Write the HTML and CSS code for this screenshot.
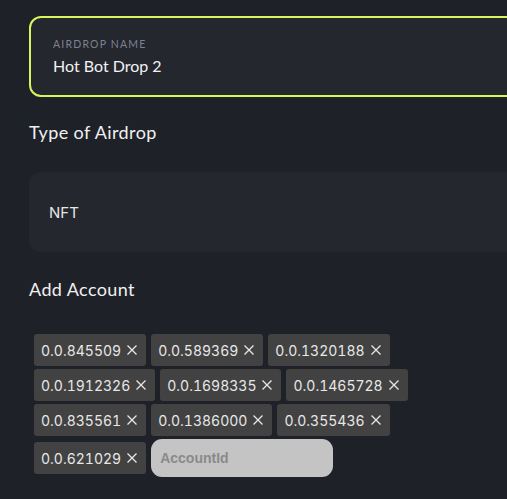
FILE: index.html
```html
<!DOCTYPE html>
<html lang="en">
<head>
  <meta charset="UTF-8" />
  <meta name="viewport" content="width=device-width, initial-scale=1.0" />
  <title>Create Airdrop</title>
  <link rel="stylesheet" href="styles.css">
</head>
<body>
  <div class="form">
    <label class="field field-active">
      <span class="field-label">AIRDROP NAME</span>
      <span class="field-value">Hot Bot Drop 2</span>
    </label>

    <h2 class="section-title">Type of Airdrop</h2>
    <div class="select">NFT</div>

    <h2 class="section-title">Add Account</h2>
    <div class="chips">
      <span class="chip">0.0.845509<svg class="chip-x" viewBox="0 0 10 10"><path d="M0.5 0.5L9.5 9.5M9.5 0.5L0.5 9.5"/></svg></span>
      <span class="chip">0.0.589369<svg class="chip-x" viewBox="0 0 10 10"><path d="M0.5 0.5L9.5 9.5M9.5 0.5L0.5 9.5"/></svg></span>
      <span class="chip">0.0.1320188<svg class="chip-x" viewBox="0 0 10 10"><path d="M0.5 0.5L9.5 9.5M9.5 0.5L0.5 9.5"/></svg></span>
      <span class="chip">0.0.1912326<svg class="chip-x" viewBox="0 0 10 10"><path d="M0.5 0.5L9.5 9.5M9.5 0.5L0.5 9.5"/></svg></span>
      <span class="chip">0.0.1698335<svg class="chip-x" viewBox="0 0 10 10"><path d="M0.5 0.5L9.5 9.5M9.5 0.5L0.5 9.5"/></svg></span>
      <span class="chip">0.0.1465728<svg class="chip-x" viewBox="0 0 10 10"><path d="M0.5 0.5L9.5 9.5M9.5 0.5L0.5 9.5"/></svg></span>
      <span class="chip">0.0.835561<svg class="chip-x" viewBox="0 0 10 10"><path d="M0.5 0.5L9.5 9.5M9.5 0.5L0.5 9.5"/></svg></span>
      <span class="chip">0.0.1386000<svg class="chip-x" viewBox="0 0 10 10"><path d="M0.5 0.5L9.5 9.5M9.5 0.5L0.5 9.5"/></svg></span>
      <span class="chip">0.0.355436<svg class="chip-x" viewBox="0 0 10 10"><path d="M0.5 0.5L9.5 9.5M9.5 0.5L0.5 9.5"/></svg></span>
      <span class="chip">0.0.621029<svg class="chip-x" viewBox="0 0 10 10"><path d="M0.5 0.5L9.5 9.5M9.5 0.5L0.5 9.5"/></svg></span>
      <input class="chip-input" type="text" placeholder="AccountId">
    </div>
  </div>
</body>
</html>
```

FILE: styles.css
```css
html, body {
  overflow: hidden;
}
body {
  margin: 0;
  background: #1f2128;
  font-family: Lato, sans-serif;
  color: #ececec;
}
.form {
  width: 560px;
  padding: 16px 0 0 29px;
}
.field {
  display: block;
  background: #25272e;
  border: 2px solid #d6f65c;
  border-radius: 12px;
  padding: 20px 22px 0;
  height: 81px;
  box-sizing: border-box;
}
.field-label {
  display: block;
  font-size: 10.5px;
  letter-spacing: 1.2px;
  color: #7e8190;
}
.field-value {
  display: block;
  margin-top: 6px;
  font-size: 16px;
  color: #f2f2f2;
}
.section-title {
  margin: 0;
  font-size: 18px;
  font-weight: 400;
  letter-spacing: 0.4px;
  color: #f0f0f0;
}
.field + .section-title {
  margin-top: 24px;
}
.select {
  margin-top: 29px;
  height: 80px;
  border-radius: 12px;
  background: #25272e;
  padding: 0 20px;
  display: flex;
  align-items: center;
  font-family: Inter, sans-serif;
  font-size: 15px;
  color: #e6e6e6;
}
.select + .section-title {
  margin-top: 26px;
}
.chips {
  margin-top: 34px;
  width: 400px;
  padding-left: 5px;
  display: flex;
  flex-wrap: wrap;
  align-items: center;
  gap: 3px 5px;
}
.chip {
  display: inline-flex;
  align-items: center;
  height: 32px;
  padding: 0 9px 0 7px;
  background: #424242;
  border-radius: 3px;
  font-family: Inter, sans-serif;
  font-size: 14px;
  font-variant-numeric: tabular-nums;
  color: #e8e8e8;
}
.chip-x {
  width: 10px;
  height: 10px;
  margin-left: 6px;
  fill: none;
  stroke: #e8e8e8;
  stroke-width: 1.3;
}
.chip-input {
  width: 182px;
  height: 38px;
  box-sizing: border-box;
  border: none;
  border-radius: 11px;
  background: #c4c4c4;
  padding: 0 9px;
  font-family: "Liberation Sans", Arial, sans-serif;
  font-weight: 700;
  font-size: 14px;
  outline: none;
}
.chip-input::placeholder {
  color: #8a8a8a;
}
```
